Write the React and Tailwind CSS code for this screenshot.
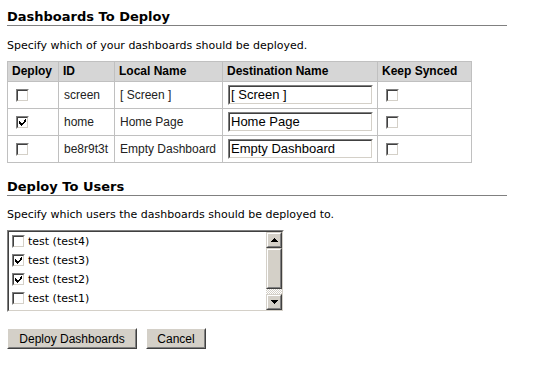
import React from "react";

const VERD = "font-['DejaVu_Sans',Verdana,sans-serif]";
const ARIAL = "font-['Liberation_Sans',Arial,sans-serif]";

function Check({ checked }) {
  return (
    <span className="inline-block w-[13px] h-[13px] border border-t-[#808080] border-l-[#808080] border-r-white border-b-white align-middle">
      <span className="relative block w-full h-full border border-t-[#404040] border-l-[#404040] border-r-[#d4d0c8] border-b-[#d4d0c8] bg-white">
        {checked && (
          <svg width="9" height="9" viewBox="0 0 9 9" className="absolute left-0 top-0" shapeRendering="crispEdges">
            <path d="M1 3h1v1h-1zM1 4h2v1h-2zM1 5h3v1h-3zM2 6h3v1h-3zM3 7h1v1h-1zM4 5h2v1h-2zM5 4h2v1h-2zM6 3h1v1h-1zM7 1h1v3h-1zM6 2h1v1h-1z" fill="#000" />
          </svg>
        )}
      </span>
    </span>
  );
}

function Heading({ children }) {
  return (
    <div className={`${VERD} font-bold text-[13px] leading-[16px] w-[500px] border-b border-[#808080] pb-0`}>
      {children}
    </div>
  );
}

function TextInput({ value }) {
  return (
    <div className="w-[145px] h-[20px] border border-t-[#808080] border-l-[#808080] border-r-white border-b-white">
      <div className={`w-full h-full border border-t-[#404040] border-l-[#404040] border-r-[#d4d0c8] border-b-[#d4d0c8] bg-white ${ARIAL} text-[13px] leading-[16px] pl-[1px] text-black whitespace-nowrap overflow-hidden`}>
        {value}
      </div>
    </div>
  );
}

function Arrow({ up }) {
  return (
    <div className="w-[16px] h-[16px] border border-t-[#d4d0c8] border-l-[#d4d0c8] border-r-[#404040] border-b-[#404040]">
      <div className="w-full h-full border border-t-white border-l-white border-r-[#808080] border-b-[#808080] bg-[#d4d0c8] flex items-center justify-center">
        <svg width="7" height="4" viewBox="0 0 7 4" shapeRendering="crispEdges">
          {up ? (
            <path d="M3 0h1v1h-1zM2 1h3v1h-3zM1 2h5v1h-5zM0 3h7v1h-7z" fill="#000" />
          ) : (
            <path d="M0 0h7v1h-7zM1 1h5v1h-5zM2 2h3v1h-3zM3 3h1v1h-1z" fill="#000" />
          )}
        </svg>
      </div>
    </div>
  );
}

function Button({ children, w }) {
  return (
    <div className={`${w} h-[21px] border border-t-white border-l-white border-r-[#404040] border-b-[#404040]`}>
      <div className={`w-full h-full border border-t-[#d4d0c8] border-l-[#d4d0c8] border-r-[#808080] border-b-[#808080] bg-[#d4d0c8] flex items-center justify-center ${ARIAL} text-[12px] leading-[14px] text-black whitespace-nowrap`}>
        {children}
      </div>
    </div>
  );
}

const rows = [
  { deploy: false, id: "screen", name: "[ Screen ]", dest: "[ Screen ]" },
  { deploy: true, id: "home", name: "Home Page", dest: "Home Page" },
  { deploy: false, id: "be8r9t3t", name: "Empty Dashboard", dest: "Empty Dashboard" },
];

const users = [
  { label: "test (test4)", checked: false },
  { label: "test (test3)", checked: true },
  { label: "test (test2)", checked: true },
  { label: "test (test1)", checked: false },
  { label: "test (test0)", checked: false },
];

export default function App() {
  const th = `border border-[#c0c0c0] bg-[#d6d6d6] ${ARIAL} font-bold text-[12px] leading-[15px] text-left px-[4px] py-[2px] text-black`;
  const td = `border border-[#c0c0c0] ${ARIAL} text-[12px] text-[#222] px-[5px] py-[3px] align-middle h-[27px]`;
  return (
    <div className="w-[536px] h-[366px] bg-white pl-[7px] pt-[9px] text-black overflow-hidden">
      <Heading>Dashboards To Deploy</Heading>
      <p className={`${VERD} text-[11px] leading-[13px] mt-[13px]`}>
        Specify which of your dashboards should be deployed.
      </p>
      <table className="mt-[9px] border-collapse table-fixed w-[464px]">
        <colgroup>
          <col className="w-[51px]" />
          <col className="w-[56px]" />
          <col className="w-[108px]" />
          <col className="w-[155px]" />
          <col className="w-[94px]" />
        </colgroup>
        <thead>
          <tr>
            <th className={th}>Deploy</th>
            <th className={th}>ID</th>
            <th className={th}>Local Name</th>
            <th className={th}>Destination Name</th>
            <th className={th}>Keep Synced</th>
          </tr>
        </thead>
        <tbody>
          {rows.map((r) => (
            <tr key={r.id}>
              <td className={`${td} pl-[8px]`}>
                <Check checked={r.deploy} />
              </td>
              <td className={td}>{r.id}</td>
              <td className={`${td} whitespace-nowrap`}>{r.name}</td>
              <td className={td}>
                <TextInput value={r.dest} />
              </td>
              <td className={`${td} pl-[8px]`}>
                <Check checked={false} />
              </td>
            </tr>
          ))}
        </tbody>
      </table>

      <div className="mt-[16px]">
        <Heading>Deploy To Users</Heading>
      </div>
      <p className={`${VERD} text-[11px] leading-[13px] mt-[12px]`}>
        Specify which users the dashboards should be deployed to.
      </p>
      <div className="mt-[9px] w-[277px] h-[82px] border border-t-[#808080] border-l-[#808080] border-r-white border-b-white">
        <div className="w-full h-full border border-t-[#404040] border-l-[#404040] border-r-[#d4d0c8] border-b-[#d4d0c8] bg-white flex">
          <div className="flex-1 overflow-hidden pl-[3px]">
            {users.map((u) => (
              <div key={u.label} className="h-[19px] flex items-center gap-[3px]">
                <Check checked={u.checked} />
                <span className={`${VERD} text-[11px] leading-[13px]`}>{u.label}</span>
              </div>
            ))}
          </div>
          <div className="w-[16px] h-full flex flex-col">
            <Arrow up />
            <div className="h-[41px] border border-t-[#d4d0c8] border-l-[#d4d0c8] border-r-[#404040] border-b-[#404040]">
              <div className="w-full h-full border border-t-white border-l-white border-r-[#808080] border-b-[#808080] bg-[#d4d0c8]" />
            </div>
            <div className="flex-1 bg-[conic-gradient(#d4d0c8_25%,#ffffff_0_50%,#d4d0c8_0_75%,#ffffff_0)] bg-[length:2px_2px]" />
            <Arrow />
          </div>
        </div>
      </div>

      <div className="mt-[16px] flex gap-[9px]">
        <Button w="w-[130px]">Deploy Dashboards</Button>
        <Button w="w-[60px]">Cancel</Button>
      </div>
    </div>
  );
}
